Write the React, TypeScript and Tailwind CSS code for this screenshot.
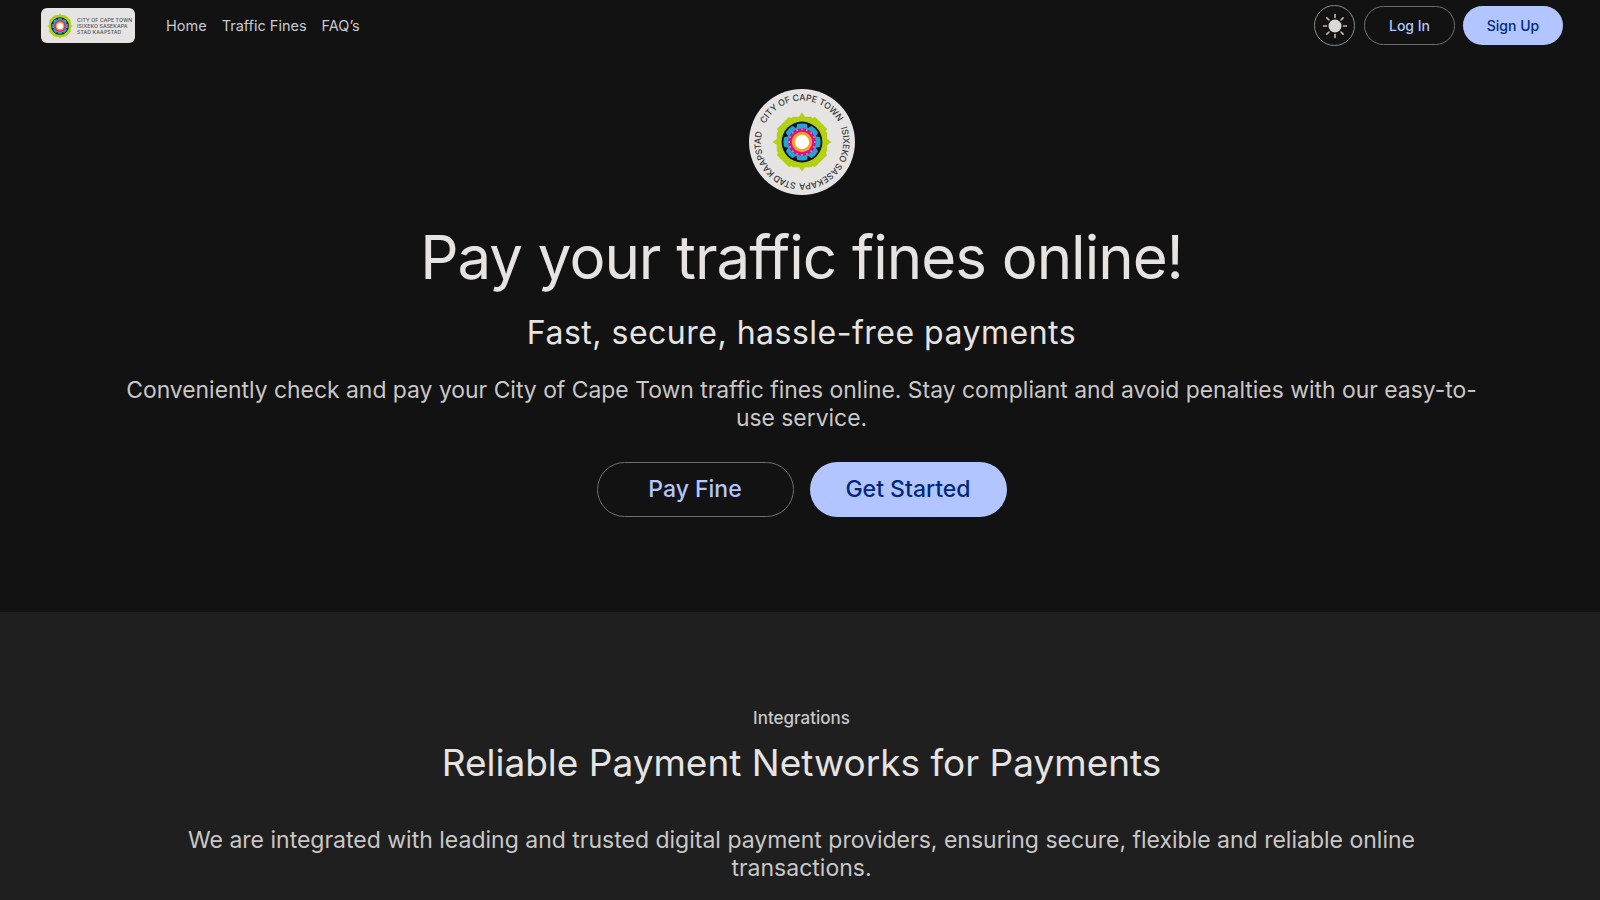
import React from "react";

const sans = "font-['Inter','Liberation_Sans',sans-serif]";

// City of Cape Town emblem: lime cog, dark and coloured rings, white centre
const Emblem = ({ size }: { size: number }) => {
  const lime = Array.from({ length: 8 }, (_, i) => i * 45);
  const darts = Array.from({ length: 8 }, (_, i) => 22.5 + i * 45);
  const dots = Array.from({ length: 16 }, (_, i) => i * 22.5);
  return (
    <svg width={size} height={size} viewBox="0 0 100 100">
      {lime.map((deg, i) => (
        <polygon
          key={deg}
          points={i % 2 === 0 ? "50,1 55,8 66,8 70,18 30,18 34,8 45,8" : "36,5 64,5 70,18 30,18"}
          fill="#b3d013"
          transform={`rotate(${deg} 50 50)`}
        />
      ))}
      <circle cx="50" cy="50" r="38" fill="#b3d013" />
      <circle cx="50" cy="50" r="34" fill="#0f1316" />
      <circle cx="50" cy="50" r="31" fill="#23a5d4" />
      {darts.map((deg) => (
        <polygon key={deg} points="45,18 55,18 50,25" fill="#0f1316" transform={`rotate(${deg} 50 50)`} />
      ))}
      <circle cx="50" cy="50" r="23" fill="#d4148a" />
      {dots.map((deg) => (
        <circle key={deg} cx="50" cy="28.5" r="1.1" fill="#f4f4f4" transform={`rotate(${deg} 50 50)`} />
      ))}
      <circle cx="50" cy="50" r="17" fill="#f7a11f" />
      <circle cx="50" cy="50" r="12" fill="#ffffff" />
    </svg>
  );
};

const SunGlyph = () => {
  const rays = Array.from({ length: 8 }, (_, i) => i * 45);
  return (
    <svg width="26" height="26" viewBox="0 0 26 26">
      <circle cx="13" cy="13" r="6.5" fill="#d9d7d7" />
      {rays.map((deg) => (
        <line
          key={deg}
          x1="13"
          y1="1.5"
          x2="13"
          y2="4.5"
          stroke="#c9b9a0"
          strokeWidth="1.6"
          strokeLinecap="round"
          transform={`rotate(${deg} 13 13)`}
        />
      ))}
    </svg>
  );
};

const NavBar = () => (
  <header className="flex h-[51px] items-center justify-between pl-[41px] pr-[37px]">
    <div className="flex items-center">
      <div className="flex h-[35px] w-[94px] items-center gap-[4px] rounded-md bg-[#e6e3e3] pl-[6px]">
        <Emblem size={26} />
        <div className="text-[5.2px] font-medium leading-[6px] tracking-[0.1px] text-[#555]">
          <div>CITY OF CAPE TOWN</div>
          <div>ISIXEKO SASEKAPA</div>
          <div>STAD KAAPSTAD</div>
        </div>
      </div>
      <nav className="ml-[31px] mt-px flex gap-[15px] text-[14.5px] text-[#c9c9d0]">
        <a>Home</a>
        <a>Traffic Fines</a>
        <a>FAQ’s</a>
      </nav>
    </div>
    <div className="flex items-center gap-2">
      <button className="mr-px flex h-[41px] w-[41px] items-center justify-center rounded-full border border-[#8a8a8a]">
        <SunGlyph />
      </button>
      <button className="h-[39px] w-[91px] rounded-full border border-[#6e6e6e] text-[14px] font-medium text-[#b3c5ff]">
        Log In
      </button>
      <button className="h-[39px] w-[100px] rounded-full bg-[#b3c5ff] text-[14px] font-medium text-[#00287a]">
        Sign Up
      </button>
    </div>
  </header>
);

const Hero = () => (
  <section className="flex h-[561px] flex-col items-center pl-[113px] pr-[110px] pt-[38px] text-center">
    <div className="relative h-[106px] w-[106px] rounded-full bg-[#e6e3e3]">
      <svg width="106" height="106" viewBox="0 0 106 106" className="absolute inset-0">
        <defs>
          <path id="ring" d="M16.15 35.03 A41 41 0 1 1 89.85 70.97 A41 41 0 1 1 16.15 35.03" />
        </defs>
        <g fontSize="8.8" fontWeight="500" fill="#3a3a3a" fontFamily="Inter, sans-serif">
          <text>
            <textPath href="#ring" startOffset="0%" textLength="90" lengthAdjust="spacing">
              CITY OF CAPE TOWN
            </textPath>
          </text>
          <text>
            <textPath href="#ring" startOffset="37.2%" textLength="82" lengthAdjust="spacing">
              ISIXEKO SASEKAPA
            </textPath>
          </text>
          <text>
            <textPath href="#ring" startOffset="70%" textLength="69" lengthAdjust="spacing">
              STAD KAAPSTAD
            </textPath>
          </text>
        </g>
      </svg>
      <div className="absolute left-[23px] top-[23px]">
        <Emblem size={60} />
      </div>
    </div>
    <h1 className="mt-[25px] text-[60px] font-normal leading-[75px] tracking-[-1px] text-[#e6e3e3]">
      Pay your traffic fines online!
    </h1>
    <h2 className="mt-[17px] text-[32px] font-normal leading-[42px] tracking-[0.5px] text-[#e6e3e3]">
      Fast, secure, hassle-free payments
    </h2>
    <p className="mt-[22px] text-[22.9px] leading-[28px] text-[#c9c7c7]">
      Conveniently check and pay your City of Cape Town traffic fines online. Stay compliant and avoid penalties with
      our easy-to-use service.
    </p>
    <div className="mt-[30px] flex gap-4">
      <button className="h-[55px] w-[197px] rounded-full border border-[#6e6e6e] text-[23px] font-medium text-[#b3c5ff]">
        Pay Fine
      </button>
      <button className="h-[55px] w-[197px] rounded-full bg-[#b3c5ff] text-[23px] font-medium text-[#00287a]">
        Get Started
      </button>
    </div>
  </section>
);

const Integrations = () => (
  <section className="flex flex-1 flex-col items-center bg-[#1f1f1f] pl-[183px] pr-[180px] pt-[94px] text-center">
    <div className="text-[17px] font-medium leading-6 text-[#c9c7c7]">Integrations</div>
    <h2 className="mt-[10px] text-[37px] font-normal leading-[45px] text-[#e6e3e3]">
      Reliable Payment Networks for Payments
    </h2>
    <p className="mt-[41px] text-[23px] leading-[28px] text-[#c9c7c7]">
      We are integrated with leading and trusted digital payment providers, ensuring secure, flexible and reliable
      online transactions.
    </p>
  </section>
);

export default function App() {
  return (
    <div className={`flex h-screen flex-col overflow-hidden bg-[#121212] ${sans}`}>
      <NavBar />
      <Hero />
      <Integrations />
    </div>
  );
}
